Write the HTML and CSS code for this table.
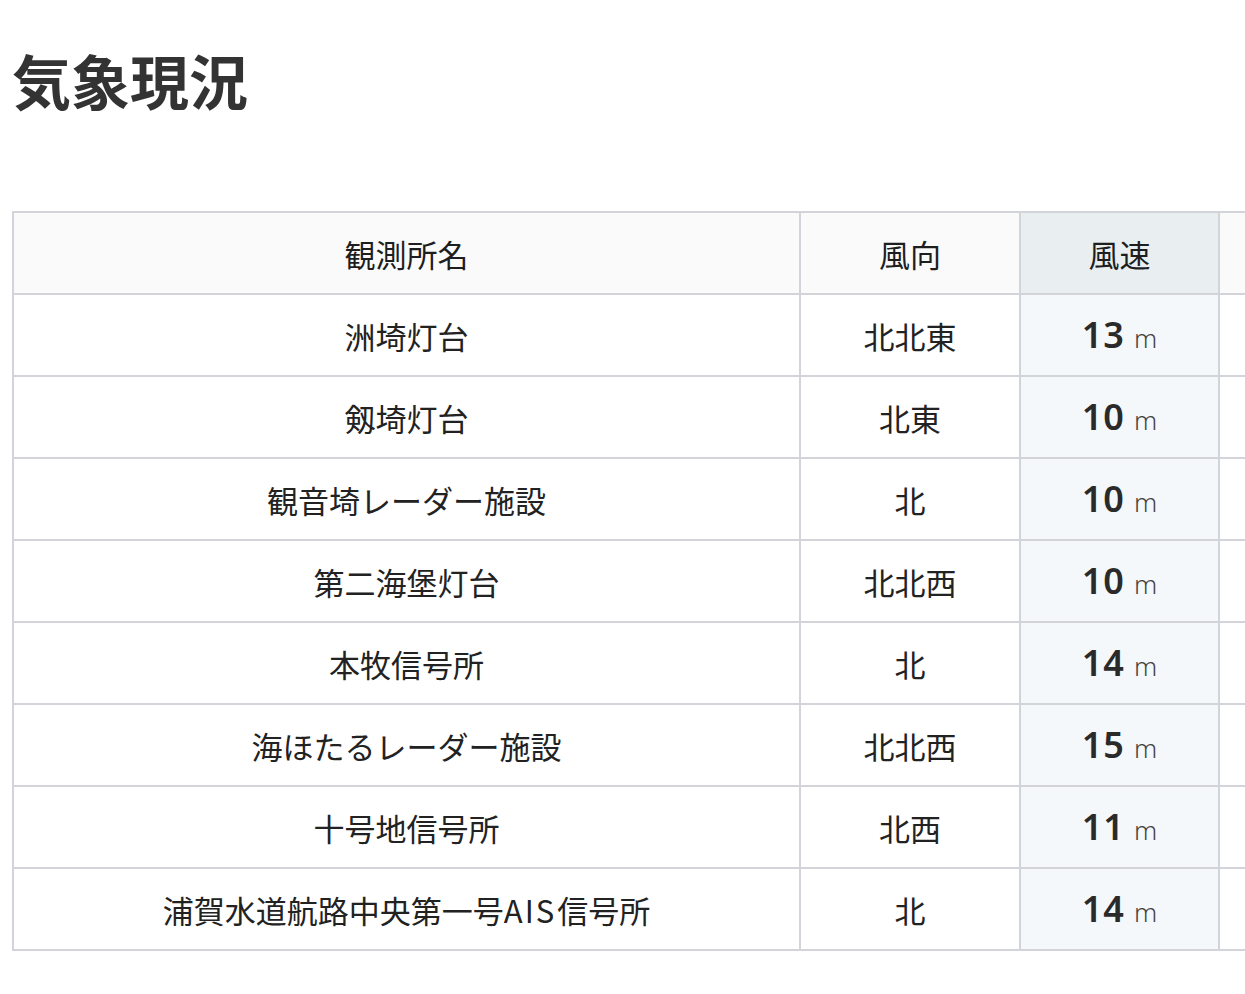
FILE: index.html
```html
<!DOCTYPE html>
<html lang="ja">
<head>
<meta charset="utf-8">
<title>気象現況</title>
<link rel="stylesheet" href="styles.css">
</head>
<body>
<div class="page">
  <h1 class="title">気象現況</h1>
  <div class="table-wrap">
    <table class="weather">
      <thead>
        <tr>
          <th class="col-name">観測所名</th>
          <th class="col-dir">風向</th>
          <th class="col-speed active">風速</th>
          <th class="col-extra"></th>
        </tr>
      </thead>
      <tbody>
        <tr><td>洲埼灯台</td><td>北北東</td><td class="active"><span class="num">13</span><span class="unit">m</span></td><td></td></tr>
        <tr><td>剱埼灯台</td><td>北東</td><td class="active"><span class="num">10</span><span class="unit">m</span></td><td></td></tr>
        <tr><td>観音埼レーダー施設</td><td>北</td><td class="active"><span class="num">10</span><span class="unit">m</span></td><td></td></tr>
        <tr><td>第二海堡灯台</td><td>北北西</td><td class="active"><span class="num">10</span><span class="unit">m</span></td><td></td></tr>
        <tr><td>本牧信号所</td><td>北</td><td class="active"><span class="num">14</span><span class="unit">m</span></td><td></td></tr>
        <tr><td>海ほたるレーダー施設</td><td>北北西</td><td class="active"><span class="num">15</span><span class="unit">m</span></td><td></td></tr>
        <tr><td>十号地信号所</td><td>北西</td><td class="active"><span class="num">11</span><span class="unit">m</span></td><td></td></tr>
        <tr><td>浦賀水道航路中央第一号<span class="latin">AIS</span>信号所</td><td>北</td><td class="active"><span class="num">14</span><span class="unit">m</span></td><td></td></tr>
      </tbody>
    </table>
  </div>
</div>
</body>
</html>
```

FILE: styles.css
```css
html, body {
  margin: 0;
  padding: 0;
  background: #ffffff;
}

body {
  font-family: "Noto Sans CJK JP", "Noto Sans", sans-serif;
  color: #222222;
}

.page {
  padding: 0 0 0 12px;
}

.title {
  margin: 0;
  padding-top: 50px;
  font-size: 59px;
  line-height: 1;
  font-weight: 700;
  color: #333333;
}

.table-wrap {
  margin-top: 102px;
  overflow: hidden;
}

.weather {
  border-collapse: collapse;
  table-layout: fixed;
  width: 1420px;
  font-size: 31px;
}

.weather th,
.weather td {
  border: 2px solid #d3d4d9;
  height: 80px;
  padding: 0;
  text-align: center;
  vertical-align: middle;
  font-weight: 400;
  color: #222222;
  line-height: 1;
}

.weather thead th {
  background: #fafafa;
  color: #1e1e1e;
}

.col-name { width: 785px; }
.col-dir { width: 218px; }
.col-speed { width: 197px; }

.weather thead th.active {
  background: #e9eef1;
}

.weather tbody td.active {
  background: #f4f8fb;
}

.latin {
  letter-spacing: 2px;
  margin-right: 1px;
}

.num {
  font-family: "Noto Sans", "Open Sans", sans-serif;
  font-size: 36px;
  font-weight: 600;
  color: #2a2a2a;
  letter-spacing: 1px;
}

.unit {
  font-family: "Noto Sans", "Open Sans", sans-serif;
  font-size: 26px;
  font-weight: 300;
  color: #444444;
  margin-left: 9px;
}
```
